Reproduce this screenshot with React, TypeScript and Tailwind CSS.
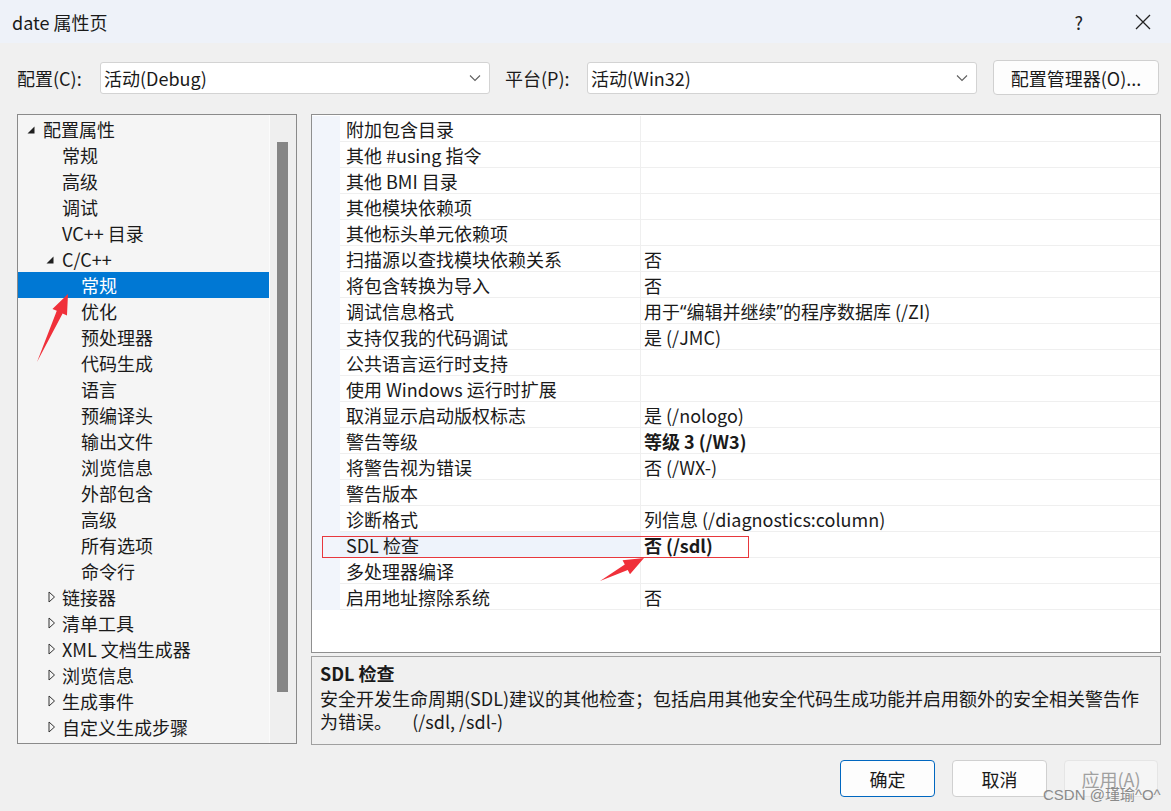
import React from "react";

type TreeItem = { label: string; level: number; state?: "open" | "closed"; selected?: boolean };

const tree: TreeItem[] = [
  { label: "配置属性", level: 0, state: "open" },
  { label: "常规", level: 1 },
  { label: "高级", level: 1 },
  { label: "调试", level: 1 },
  { label: "VC++ 目录", level: 1 },
  { label: "C/C++", level: 1, state: "open" },
  { label: "常规", level: 2, selected: true },
  { label: "优化", level: 2 },
  { label: "预处理器", level: 2 },
  { label: "代码生成", level: 2 },
  { label: "语言", level: 2 },
  { label: "预编译头", level: 2 },
  { label: "输出文件", level: 2 },
  { label: "浏览信息", level: 2 },
  { label: "外部包含", level: 2 },
  { label: "高级", level: 2 },
  { label: "所有选项", level: 2 },
  { label: "命令行", level: 2 },
  { label: "链接器", level: 1, state: "closed" },
  { label: "清单工具", level: 1, state: "closed" },
  { label: "XML 文档生成器", level: 1, state: "closed" },
  { label: "浏览信息", level: 1, state: "closed" },
  { label: "生成事件", level: 1, state: "closed" },
  { label: "自定义生成步骤", level: 1, state: "closed" },
];

type Prop = { name: string; value?: React.ReactNode; bold?: boolean; selected?: boolean };

const latin = { fontFamily: "'Noto Sans', sans-serif" };

const props: Prop[] = [
  { name: "附加包含目录" },
  { name: "其他 #using 指令" },
  { name: "其他 BMI 目录" },
  { name: "其他模块依赖项" },
  { name: "其他标头单元依赖项" },
  { name: "扫描源以查找模块依赖关系", value: "否" },
  { name: "将包含转换为导入", value: "否" },
  {
    name: "调试信息格式",
    value: (
      <>
        用于<span style={latin}>“</span>编辑并继续<span style={latin}>”</span>的程序数据库 (/ZI)
      </>
    ),
  },
  { name: "支持仅我的代码调试", value: "是 (/JMC)" },
  { name: "公共语言运行时支持" },
  { name: "使用 Windows 运行时扩展" },
  { name: "取消显示启动版权标志", value: "是 (/nologo)" },
  { name: "警告等级", value: "等级 3 (/W3)", bold: true },
  { name: "将警告视为错误", value: "否 (/WX-)" },
  { name: "警告版本" },
  { name: "诊断格式", value: "列信息 (/diagnostics:column)" },
  { name: "SDL 检查", value: "否 (/sdl)", bold: true, selected: true },
  { name: "多处理器编译" },
  { name: "启用地址擦除系统", value: "否" },
];

const textPad: Record<number, string> = { 0: "pl-[25px]", 1: "pl-[44px]", 2: "pl-[63px]" };
const triPos: Record<number, string> = { 0: "left-[9px]", 1: "left-[28px]", 2: "left-[47px]" };

function arrowPoints(tx: number, ty: number, hx: number, hy: number) {
  const dx = hx - tx;
  const dy = hy - ty;
  const len = Math.hypot(dx, dy);
  const ux = dx / len;
  const uy = dy / len;
  const nx = -uy;
  const ny = ux;
  const headLen = 20;
  const headW = 8;
  const shaftW = 3.2;
  const bx = hx - ux * headLen;
  const by = hy - uy * headLen;
  const pts = [
    [tx, ty],
    [bx + nx * shaftW, by + ny * shaftW],
    [bx + nx * headW, by + ny * headW],
    [hx, hy],
    [bx - nx * headW, by - ny * headW],
    [bx - nx * shaftW, by - ny * shaftW],
  ];
  return pts.map((p) => p.join(",")).join(" ");
}

function Chevron() {
  return (
    <svg width="12" height="8" viewBox="0 0 12 8" className="shrink-0">
      <path d="M1 1.5 L6 6.5 L11 1.5" fill="none" stroke="#5f5f5f" strokeWidth="1.1" />
    </svg>
  );
}

function SelectBox({ value, width }: { value: string; width: string }) {
  return (
    <div className={`${width} h-[32px] bg-white border border-[#d3d3d3] rounded-[3px] flex items-center justify-between pl-[3px] pr-[8px]`}>
      <span>{value}</span>
      <Chevron />
    </div>
  );
}

export default function App() {
  return (
    <div
      className="relative w-[1171px] h-[811px] overflow-hidden bg-[#f0f0f0] text-[18px] text-[#1a1a1a] leading-[26px]"
      style={{ fontFamily: "'Noto Sans CJK SC', 'Noto Sans', sans-serif" }}
    >
      {/* Title bar */}
      <div className="h-[43px] bg-[#eef2f9] flex items-center justify-between pl-[12px] pr-[20px]">
        <span className="text-[18px]">date 属性页</span>
        <div className="flex items-center gap-[52px]">
          <span className="text-[18px] text-[#222]">?</span>
          <svg width="16" height="16" viewBox="0 0 16 16">
            <path d="M1 1 L15 15 M15 1 L1 15" stroke="#222" strokeWidth="1.3" />
          </svg>
        </div>
      </div>

      {/* Config row */}
      <div className="flex items-center mt-[17px] pl-[17px] pr-[12px] h-[35px]">
        <span className="w-[83px]">配置(C):</span>
        <SelectBox value="活动(Debug)" width="w-[390px]" />
        <span className="ml-[15px] w-[82px]">平台(P):</span>
        <SelectBox value="活动(Win32)" width="w-[390px]" />
        <div className="ml-[16px] w-[166px] h-[35px] bg-[#fdfdfd] border border-[#d0d0d0] rounded-[4px] flex items-center justify-center">
          配置管理器(O)...
        </div>
      </div>

      {/* Main */}
      <div className="flex mt-[19px] pl-[17px]">
        {/* Tree */}
        <div className="w-[280px] h-[630px] border border-[#8a8a8a] bg-[#f5f5f5] flex">
          <div className="flex-1 pt-[1px]">
            {tree.map((t, i) => (
              <div
                key={i}
                className={`relative h-[26px] flex items-center ${textPad[t.level]} ${
                  t.selected ? "bg-[#0078d4] text-white" : ""
                }`}
              >
                {t.state === "open" && (
                  <svg width="8" height="8" viewBox="0 0 8 8" className={`absolute ${triPos[t.level]} top-[10px]`}>
                    <polygon points="7.5,0.5 7.5,7.5 0.5,7.5" fill="#1f1f1f" />
                  </svg>
                )}
                {t.state === "closed" && (
                  <svg width="8" height="12" viewBox="0 0 8 12" className={`absolute left-[30px] top-[7px]`}>
                    <polygon points="1,1 6.5,6 1,11" fill="none" stroke="#333" strokeWidth="1" />
                  </svg>
                )}
                <span>{t.label}</span>
              </div>
            ))}
          </div>
          <div className="w-[27px] h-full bg-[#efefef] border-l border-[#fbfbfb] pt-[27px] pl-[7px]">
            <div className="w-[11px] h-[550px] bg-[#868686]" />
          </div>
        </div>

        {/* Right column */}
        <div className="ml-[14px] w-[850px] flex flex-col">
          <div className="h-[539px] border border-[#8f8f8f] bg-white pt-[1px]">
            {props.map((p, i) => (
              <div key={i} className="flex h-[26px]">
                <div className="w-[28px] bg-[#f2f5fb]" />
                <div
                  className={`w-[301px] border-b border-[#efefef] border-r pl-[6px] flex items-center ${
                    p.selected ? "bg-[#eef3fb]" : ""
                  }`}
                >
                  {p.name}
                </div>
                <div className={`flex-1 border-b border-[#efefef] pl-[3px] flex items-center ${p.bold ? "font-bold" : ""}`}>
                  {p.value ?? ""}
                </div>
              </div>
            ))}
          </div>
          <div className="mt-[3px] h-[89px] border border-[#a0a0a0] bg-[#f0f0f0] px-[8px] pt-[3px]">
            <div className="font-bold leading-[26px]">SDL 检查</div>
            <div className="mt-[1px] leading-[23px]">安全开发生命周期(SDL)建议的其他检查；包括启用其他安全代码生成功能并启用额外的安全相关警告作</div>
            <div className="whitespace-pre leading-[23px]">为错误。     (/sdl, /sdl-)</div>
          </div>
        </div>
      </div>

      {/* Buttons */}
      <div className="flex justify-end gap-[17px] mt-[15px] pr-[13px]">
        <div className="w-[95px] h-[37px] bg-[#fdfdfd] border border-[#0067c0] rounded-[4px] flex items-center justify-center">确定</div>
        <div className="w-[95px] h-[37px] bg-[#fdfdfd] border border-[#d0d0d0] rounded-[4px] flex items-center justify-center">取消</div>
        <div className="w-[94px] h-[37px] bg-[#f5f5f5] border border-[#e5e5e5] rounded-[4px] flex items-center justify-center text-[#a0a0a0]">应用(A)</div>
      </div>

      {/* Annotations */}
      <div className="absolute left-[322px] top-[536px] w-[427px] h-[22px] border border-[#e8383d] pointer-events-none" />
      <svg className="absolute left-0 top-0 pointer-events-none" width="1171" height="811">
        <polygon points={arrowPoints(37, 362, 68, 294)} fill="#f0303a" />
        <polygon points={arrowPoints(600, 581, 644, 558)} fill="#f0303a" />
      </svg>
      <div
        className="absolute left-[1043px] top-[785px] text-[15px] leading-[20px] text-[#8a8a8a] pointer-events-none"
        style={{ fontFamily: "'Liberation Sans', 'Noto Sans CJK SC', sans-serif" }}
      >
        CSDN @瑾瑜^O^
      </div>
    </div>
  );
}
